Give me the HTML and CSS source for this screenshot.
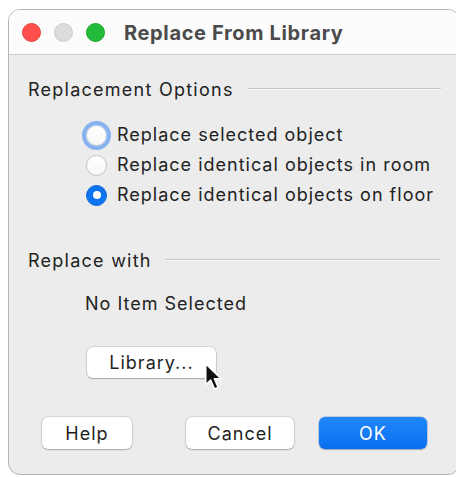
FILE: index.html
```html
<!DOCTYPE html>
<html lang="en">
<head>
<meta charset="utf-8">
<title>Replace From Library</title>
<link rel="stylesheet" href="styles.css">
</head>
<body>
<div class="window">
  <div class="titlebar">
    <div class="lights">
      <span class="light light-close"></span>
      <span class="light light-min"></span>
      <span class="light light-zoom"></span>
    </div>
    <div class="title">Replace From Library</div>
  </div>

  <div class="content">
    <div class="group-head">
      <span class="group-label">Replacement Options</span>
      <span class="rule"></span>
    </div>
    <div class="radios">
      <label class="radio-row">
        <span class="radio focused"></span>
        <span class="radio-text">Replace selected object</span>
      </label>
      <label class="radio-row">
        <span class="radio"></span>
        <span class="radio-text">Replace identical objects in room</span>
      </label>
      <label class="radio-row">
        <span class="radio checked"></span>
        <span class="radio-text">Replace identical objects on floor</span>
      </label>
    </div>

    <div class="group-head group-replace">
      <span class="group-label">Replace with</span>
      <span class="rule"></span>
    </div>
    <div class="selection">No Item Selected</div>
    <div class="library-wrap">
      <button class="btn btn-library">Library...</button>
      <svg class="cursor" width="21" height="30" viewBox="0 0 20 29">
        <path d="M1.5 1.5 L1.5 22 L6.3 17.6 L10 26.2 L13.6 24.6 L10 16.3 L16.5 16.3 Z" fill="#111" stroke="#fff" stroke-width="1.6" stroke-linejoin="round"/>
      </svg>
    </div>
  </div>

  <div class="footer">
    <button class="btn btn-help">Help</button>
    <button class="btn btn-cancel">Cancel</button>
    <button class="btn btn-ok">OK</button>
  </div>
</div>
</body>
</html>
```

FILE: styles.css
```css
html, body {
  margin: 0;
  padding: 0;
  background: #ffffff;
  overflow: hidden;
}

body {
  font-family: Inter, "Liberation Sans", sans-serif;
  color: #222222;
  width: 456px;
  height: 477px;
}

.window {
  margin: 9px 0 0 8px;
  width: 452px;
  height: 466px;
  box-sizing: border-box;
  border: 1px solid #b4b4b4;
  border-radius: 12px;
  background: #ececec;
  overflow: hidden;
  display: flex;
  flex-direction: column;
}

/* title bar with the three window controls */
.titlebar {
  height: 45px;
  box-sizing: border-box;
  background: #fcfcfc;
  border-bottom: 1px solid #cfcfcf;
  display: flex;
  align-items: center;
  padding-left: 13px;
}

.lights {
  display: flex;
  gap: 13px;
  margin-top: 1px;
}

.light {
  width: 19px;
  height: 19px;
  border-radius: 50%;
  box-sizing: border-box;
}

.light-close { background: #fe4f4c; border: 1px solid #e5413e; }
.light-min   { background: #dcdcdc; border: 1px solid #cdcdcd; }
.light-zoom  { background: #23bb3b; border: 1px solid #1aa630; }

.title {
  margin-left: 19px;
  font-size: 20px;
  font-weight: 700;
  letter-spacing: 0.65px;
  color: #4b4b4b;
  margin-top: 1px;
}

.content {
  padding: 0 18px 0 19px;
  display: flex;
  flex-direction: column;
}

/* section heading with an etched rule */
.group-head {
  display: flex;
  align-items: center;
  gap: 14px;
  height: 20px;
  margin-top: 25px;
}

.group-label,
.radio-text,
.selection,
.btn {
  font-size: 18px;
  letter-spacing: 1px;
}

.group-label {
  line-height: 20px;
  white-space: nowrap;
  letter-spacing: 1.25px;
}

.rule {
  flex: 1;
  height: 1px;
  background: #c6c6c6;
  border-bottom: 1px solid #f7f7f7;
  margin-top: -3px;
}

.radios {
  display: flex;
  flex-direction: column;
  margin-top: 20px;
  padding-left: 58px;
}

.radio-row {
  display: flex;
  align-items: center;
  height: 30px;
  gap: 10px;
}

.radio {
  width: 21px;
  height: 21px;
  box-sizing: border-box;
  border-radius: 50%;
  background: linear-gradient(#ffffff, #f7f7f7);
  border: 1px solid #c4c4c4;
  flex: none;
  position: relative;
}

.radio.focused {
  border-color: #b9c9de;
  box-shadow: 0 0 0 4px #86b3ef;
}

.radio.checked {
  background: #0f74ef;
  border-color: #0c69da;
}

.radio.checked::after {
  content: "";
  position: absolute;
  left: 50%;
  top: 50%;
  width: 8px;
  height: 8px;
  margin: -4px 0 0 -4px;
  border-radius: 50%;
  background: #ffffff;
}

.radio-text {
  line-height: 20px;
  white-space: nowrap;
}

.group-replace {
  margin-top: 41px;
}

.selection {
  margin-top: 23px;
  padding-left: 57px;
  line-height: 20px;
}

.library-wrap {
  margin-top: 33px;
  padding-left: 59px;
  position: relative;
  height: 31px;
}

.btn {
  font-family: Inter, "Liberation Sans", sans-serif;
  color: #1f1f1f;
  background: #ffffff;
  border: none;
  border-radius: 6px;
  box-shadow: 0 0 0 0.5px rgba(0, 0, 0, 0.18), 0 1px 1.5px rgba(0, 0, 0, 0.22);
  padding: 0;
  height: 31px;
  cursor: default;
}

.btn-library {
  width: 129px;
}

.cursor {
  position: absolute;
  left: 176px;
  top: 15px;
}

.footer {
  display: flex;
  margin-top: 39px;
  padding-left: 33px;
}

.footer .btn {
  height: 32px;
}

.btn-help {
  width: 90px;
}

.btn-cancel {
  width: 108px;
  margin-left: 54px;
}

.btn-ok {
  width: 108px;
  margin-left: 25px;
  color: #ffffff;
  background: linear-gradient(#2088fb, #0b6ff0);
  box-shadow: 0 0 0 0.5px rgba(0, 60, 160, 0.35), 0 1px 1.5px rgba(0, 0, 0, 0.2);
}
```
